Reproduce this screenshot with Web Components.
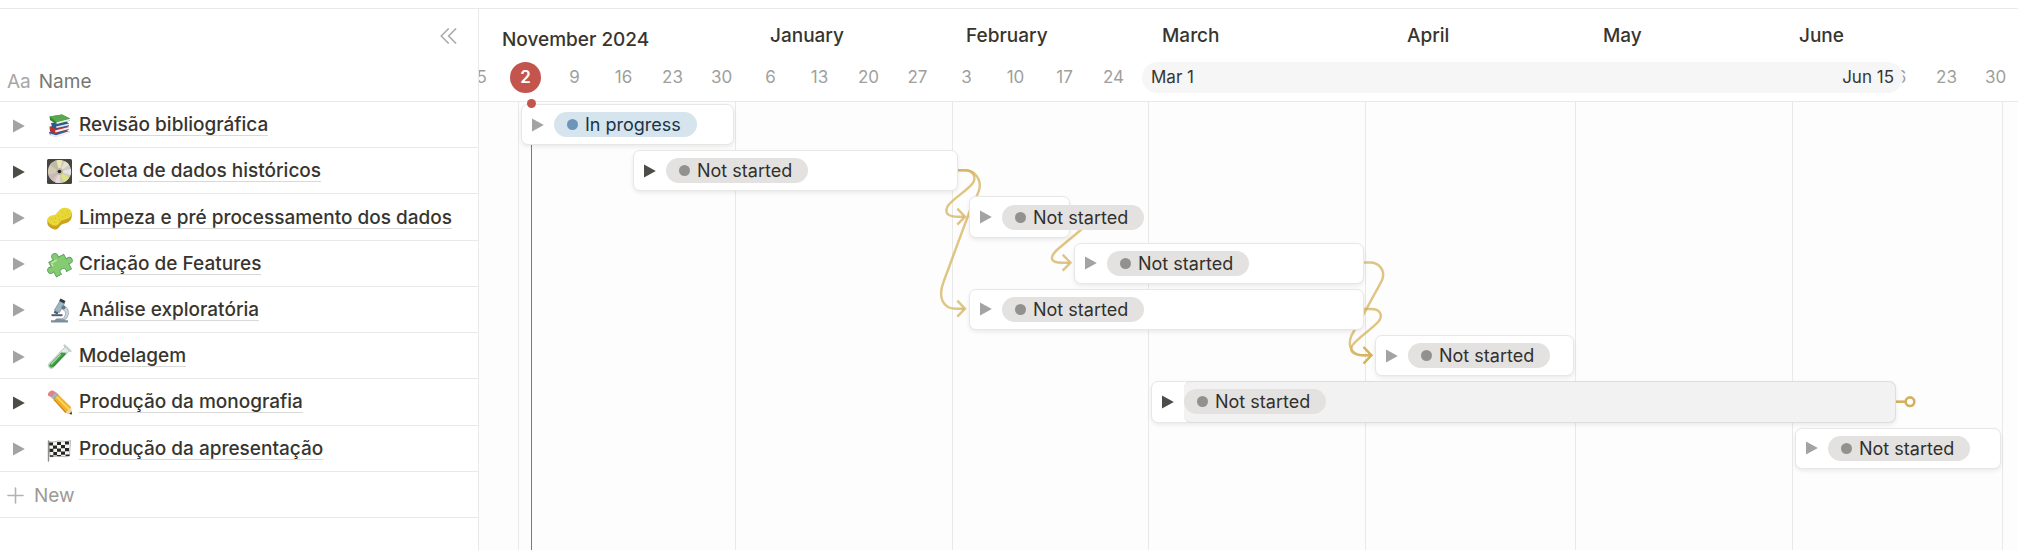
<!DOCTYPE html>
<html lang="pt-BR">
<head>
<meta charset="utf-8">
<title>Timeline</title>
<style>
  body { margin: 0; background: #fff; font-family: Inter, "Liberation Sans", sans-serif; color: #37352f; }
</style>
</head>
<body>
<timeline-view></timeline-view>

<script>
const LINE = '#e9e9e8';

class BaseElement extends HTMLElement {
  constructor() {
    super();
    this.attachShadow({ mode: 'open' });
  }
  connectedCallback() {
    this.shadowRoot.innerHTML = this.render();
  }
}

/* Page icons, drawn on a 25px square */
const ICONS = {
  books: `<path d="M2 19 18 16l5 3-14 5-6-2z" fill="#2f5f9c"/><path d="M3 20.500 9 22.300 22.500 18v2L9.500 24.300 4 22.700z" fill="#f0f0ee"/>
    <path d="M2.500 13.500 18 11.500l4 2.500v2.600L8 20.500 3 18.500z" fill="#b9302f"/><path d="M8 17.500 22 14v2L8.500 19.600z" fill="#f3efea"/>
    <path d="M4 10 19 8.500l3 2v2.500L9 16 5 14z" fill="#2c5797"/><path d="M9 13.500 22 10.500v1.800L9.500 15z" fill="#e9eaec"/>
    <path d="M2.500 3.500 15 1.500 23 5.500v2.200L9.500 11.500 3 7z" fill="#35853a"/><path d="M2.500 3.500 15 1.500 23 5.500 9.500 9z" fill="#58a84f"/><path d="M9.500 9.300 23 5.800v1.700L9.700 11z" fill="#eef1ea"/>`,
  disc: `<rect width="25" height="25" rx="1.500" fill="#45443f"/>
    <circle cx="12.500" cy="12.500" r="11.600" fill="#d3ccb4"/>
    <path d="M12.500 12.500 3 6A11.600 11.600 0 0 1 9 1.500z" fill="#c0b9a5"/>
    <path d="M12.500 12.500 9.500 1.300A11.600 11.600 0 0 1 15 1.200z" fill="#ebe8b9"/>
    <path d="M12.500 12.500 18 2.300A11.600 11.600 0 0 1 22 6z" fill="#e6dfd7"/>
    <path d="M12.500 12.500 23.800 10A11.600 11.600 0 0 1 23.600 16z" fill="#e2e4ec"/>
    <path d="M12.500 12.500 22 19A11.600 11.600 0 0 1 17 23.200z" fill="#dfe37d"/>
    <path d="M12.500 12.500 13 24.100A11.600 11.600 0 0 1 8 23.200z" fill="#ead9dc"/>
    <path d="M12.500 12.500 5 21.300A11.600 11.600 0 0 1 1.500 16z" fill="#cbb7c0"/>
    <circle cx="12.500" cy="12.500" r="3.600" fill="#bdb9a4"/><circle cx="12.500" cy="12.500" r="1.800" fill="#25241f"/>`,
  sponge: `<path d="M.4 13.500V18c1 3 5 5.500 8.300 5.500 3.300-.5 3.500-3.500 6-5 2.500-1.300 5.500-1 8-3.500 2-2 2.300-4 2.100-8.500z" fill="#c9a51f"/>
    <path d="M.5 13C1 10.500 4 9.500 7 9c3-.7 4-4.500 7-6.300C17 1 22.500 2 24.300 5c1.200 3.500-.8 6.500-3.800 7.700-2.500 1-4.500.8-6.500 2.300-2 1.800-2.500 4.500-5.500 4.700C5 19.800 0 16.800.5 13z" fill="#e9d736"/>
    <path d="M4 13h1M8 12h1M7 16h1M11 10h1M12 14h1M15 6h1M18 9h1M20 5h1M15 11h1M21 8h1" stroke="#cdb626" stroke-width="1.100"/>`,
  puzzle: `<g transform="rotate(-28 12.500 12.500)"><path d="M4 5.500h5.200C8 2.500 9.500.3 12 .3s4 2.200 2.800 5.200H21v5.300c3-1.200 5 .3 5 2.700s-2 4-5 2.700V22h-5.700c1.200-2.800-.5-4.500-2.800-4.500S8.500 19.200 9.700 22H4v-5.800C1 17.500-1 16-1 13.500s2-4 5-2.700z" fill="#86cb72" stroke="#59a060" stroke-width=".9"/><path d="M6 7.300h6M6 8v3" stroke="#c4edb0" stroke-width="1.300"/></g>`,
  microscope: `<path d="M4 24.500v-2.300h3.500l2-1.700h7l2 1.700H21v2.300z" fill="#7d8f9b"/>
    <path d="M15.500 7.500c6 1 8 8 3.500 13.500l-5 1c5-3 6.500-8.500 1.500-10.800z" fill="#cdd7dd" stroke="#8997a1" stroke-width=".7"/>
    <path d="M4.500 16.200h11v2h-11z" fill="#51606b"/>
    <path d="m13 2.800 4.500 2.400-5 9.300-5-2.500z" fill="#9fb5c4" stroke="#71869a" stroke-width=".7"/>
    <path d="M13.500.5 18.500 3l-1.300 2.400-5-2.500z" fill="#2e3b44"/><path d="m7.500 12.500 4 2-1.200 2-3.500-1.700z" fill="#4d5c69"/><circle cx="16.500" cy="9.500" r="2" fill="#657988"/>`,
  tube: `<path d="M18.500 2.500 2.200 19.500a2.900 2.900 0 0 0 4.200 4L22.500 6.500z" fill="#e3ebe6" stroke="#a9bdb0" stroke-width=".8"/>
    <path d="M14 8.500 2.900 20a2.100 2.100 0 0 0 3 3L19.500 8.800z" fill="#3f9e43"/>
    <path d="M13.500 10.500 4.500 20" stroke="#9bd99a" stroke-width="1.400" stroke-linecap="round"/>
    <path d="M18.500 9.800 6.200 22.600" stroke="#236f2c"/>
    <path d="m17.500 1.500 6 5.500" stroke="#c5cbc8" stroke-width="2.200" stroke-linecap="round"/>`,
  pencil: `<path d="M6.300 8.800 11 4.300 24 17l.8 7.300-7-1.500z" fill="#f0b429"/><path d="m9 6.200 13.500 13.600" stroke="#fad566" stroke-width="1.800"/><path d="M7 9.500 19 22.600" stroke="#cf8b1c" stroke-width="1.300"/>
    <path d="m18.300 22.900 5.300-5.500 1.200 7z" fill="#f0d3a2"/><path d="m22.300 23.900 2.200-2.300.4 2.900z" fill="#33302c"/>
    <path d="m4 6.500 4.500-4.300 2.700 2.300-4.800 4.700z" fill="#a9b4bd" stroke="#77828b" stroke-width=".5"/>
    <path d="M1.200 5.700C-.3 3.300 3.500-.6 6.200.6l2.500 1.800L4 7z" fill="#e58286"/>`,
  flag: `<path d="M2 4.500c4 1.500 7-.8 11-.5s7 1 10.500-.5l-1 15.500c-4 1.500-6.500.3-10 0s-6 1.500-9.500.5z" fill="#f4f4f3" stroke="#777" stroke-width=".5"/>
    <path d="M2 5.500h4v3H2zM10 5h4v3h-4zM18 4.500h4v3h-4zM6 8.500h4v3.200H6zM14 8h4v3.200h-4zM2.500 11.700h3.800v3.200H2.500zM10 11.500h4v3.200h-4zM18 11h4v3.200h-4zM6.300 15H10v3.300H6.300zM14 14.500h4v3.200h-4zM2.800 18.300h3.500v1.500H2.800zM10 18h4v1.200h-4zM18.500 17.500h4V19h-4z" fill="#262625"/>
    <path d="M1.500 4v20" stroke="#8f8f8e" stroke-width="1.400" stroke-linecap="round"/>`
};

customElements.define('page-icon', class extends BaseElement {
  render() {
    return `<style>:host { display: block; width: 25px; height: 25px; } svg { display: block; overflow: visible; }</style>
    <svg width="25" height="25" viewBox="0 0 25 25" fill="none" aria-hidden="true">${ICONS[this.getAttribute('name')]}</svg>`;
  }
});

/* Small disclosure triangle, dark when the item has sub-items */
customElements.define('disclosure-toggle', class extends BaseElement {
  render() {
    return `<style>
      :host { display: block; flex: none; width: 12px; height: 14px; color: #a3a3a1; }
      :host([filled]) { color: #4d4c48; }
      button { display: block; width: 12px; height: 14px; margin: 0; padding: 0; border: 0; background: none; color: inherit; }
      svg { display: block; }
    </style>
    <button type="button" aria-label="Toggle sub-items"><svg width="12" height="14" viewBox="0 0 12 14"><path d="M0 .4 11.8 7 0 13.6z" fill="currentColor"/></svg></button>`;
  }
});

/* One line of the name table */
customElements.define('task-row', class extends BaseElement {
  render() {
    return `<style>
      :host { display: flex; align-items: center; box-sizing: border-box; padding: 2px 0 0 13px; border-bottom: 1px solid ${LINE}; }
      page-icon { flex: none; margin: 0 7px 0 22px; }
      a { font-size: 19px; line-height: 20px; font-weight: 500; color: inherit; text-decoration: none; border-bottom: 1px solid #d9d9d7; white-space: nowrap; }
    </style>
    <disclosure-toggle ${this.hasAttribute('parent') ? 'filled' : ''}></disclosure-toggle>
    <page-icon name="${this.getAttribute('icon')}"></page-icon>
    <a href="#"><slot></slot></a>`;
  }
});

/* Bar on the timeline; start and end count days from 1 December */
customElements.define('task-bar', class extends BaseElement {
  render() {
    const at = n => Number(this.getAttribute(n));
    return `<style>
      :host { grid-column: ${at('start') + 1} / ${at('end') + 1}; grid-row: ${at('row')};
        position: relative; display: flex; align-items: center; box-sizing: border-box; min-width: 0;
        margin: 2px 1px 3px 3px; padding-left: 10px; border: 1px solid #e7e7e6; border-radius: 7px;
        background: #fff; box-shadow: 0 2px 4px rgba(15,15,15,.08); }
      .fill { position: absolute; inset: -1px -1px -1px 32px; box-sizing: border-box; border: 1px solid #dededd; border-left: 0; border-radius: 7px; background: #f2f2f2; }
      status-pill { position: relative; margin-left: 10px; }
    </style>
    ${this.hasAttribute('resizing') ? '<div class="fill"></div>' : ''}
    <disclosure-toggle ${this.hasAttribute('parent') ? 'filled' : ''}></disclosure-toggle>
    <status-pill ${this.hasAttribute('active') ? 'active' : ''}><slot></slot></status-pill>`;
  }
});

customElements.define('status-pill', class extends BaseElement {
  render() {
    return `<style>
      :host { display: flex; align-items: center; flex: none; gap: 7px; padding: 0 16px 0 13px; height: 25px; border-radius: 13px;
        background: #e3e2e0; color: #32302c; font-size: 18px; line-height: 25px; white-space: nowrap; --dot: #91918e; }
      :host([active]) { background: #d6e4ed; color: #183347; --dot: #6c96b9; }
      i { width: 11px; height: 11px; border-radius: 50%; background: var(--dot); }
    </style><i></i><span><slot></slot></span>`;
  }
});

/* Left pane: column header, task names, new button */
customElements.define('name-pane', class extends BaseElement {
  render() {
    return `<style>
      :host { display: block; box-sizing: border-box; flex: none; width: 479px; border-right: 1px solid ${LINE}; background: #fff; }
      header { display: flex; flex-direction: column; justify-content: space-between; box-sizing: border-box; height: 93px; padding: 18px 20px 7px 7px; border-bottom: 1px solid ${LINE}; }
      button { display: flex; align-items: center; margin: 0; padding: 0; border: 0; background: none; font: inherit; }
      .collapse { align-self: flex-end; width: 18px; height: 18px; color: #acaba9; }
      .label { display: flex; gap: 8px; font-size: 19px; line-height: 24px; color: #787774; }
      .label span { color: #a8a7a5; }
      .rows { display: grid; grid-template-rows: repeat(9, 1fr); height: var(--rows); }
      .new { gap: 10px; padding: 2px 0 0 7px; border-bottom: 1px solid ${LINE}; color: #9b9a97; font-size: 19px; }
      .new svg { color: #b3b2b0; }
      svg { display: block; }
    </style>
    <header>
      <button class="collapse" type="button" aria-label="Hide table"><svg width="18" height="18" viewBox="0 0 18 18" fill="none" stroke="currentColor" stroke-width="1.7" stroke-linecap="round" stroke-linejoin="round"><path d="M8.2 2 1.2 9l7 7M15.6 2l-7 7 7 7"/></svg></button>
      <div class="label"><span>Aa</span>Name</div>
    </header>
    <div class="rows">
      <task-row icon="books">Revisão bibliográfica</task-row>
      <task-row icon="disc" parent>Coleta de dados históricos</task-row>
      <task-row icon="sponge">Limpeza e pré processamento dos dados</task-row>
      <task-row icon="puzzle">Criação de Features</task-row>
      <task-row icon="microscope">Análise exploratória</task-row>
      <task-row icon="tube">Modelagem</task-row>
      <task-row icon="pencil" parent>Produção da monografia</task-row>
      <task-row icon="flag">Produção da apresentação</task-row>
      <button class="new" type="button"><svg width="17" height="17" viewBox="0 0 17 17" stroke="currentColor" stroke-width="1.6" stroke-linecap="round"><path d="M8.500 1v15M1 8.500h15"/></svg>New</button>
    </div>`;
  }
});

/* Month names over weekly ticks; every week is 49px wide */
customElements.define('time-axis', class extends BaseElement {
  render() {
    const months = [[7, 'January'], [11, 'February'], [15, 'March'], [20, 'April'], [24, 'May'], [28, 'June']];
    const ticks = [[1, 25], [2, 2], [3, 9], [4, 16], [5, 23], [6, 30], [7, 6], [8, 13], [9, 20], [10, 27],
      [11, 3], [12, 10], [13, 17], [14, 24], [30, 16], [31, 23], [32, 30]];
    return `<style>
      :host { display: block; box-sizing: border-box; height: 93px; overflow: hidden; border-bottom: 1px solid ${LINE}; background: #fff; }
      .months, .ticks { display: grid; grid-template-columns: repeat(32, 49px); }
      .months { grid-template-rows: 53px; margin-left: -3px; font-size: 19px; line-height: 54px; font-weight: 500; white-space: nowrap; }
      .months .current { grid-column: 1 / 5; padding-left: 26px; line-height: 62px; }
      .ticks { position: relative; grid-template-rows: 31px; margin-left: -27px; font-size: 17px; line-height: 31px; text-align: center; color: #a09f9d; }
      .ticks span { grid-row: 1; }
      .ticks .today { justify-self: center; width: 31px; border-radius: 50%; background: #c4554d; color: #fff; font-weight: 600; }
      .range { position: absolute; left: 690px; width: 761px; box-sizing: border-box; display: flex; justify-content: space-between; padding: 0 9px; border-radius: 16px; background: #f6f6f6; color: #37352f; }
    </style>
    <div class="months"><span class="current">November 2024</span>
      ${months.map(([w, t]) => `<span style="grid-column:${w}/span 4;grid-row:1">${t}</span>`).join('')}</div>
    <div class="ticks">
      ${ticks.map(([w, t]) => `<span ${w === 2 ? 'class="today"' : ''} style="grid-column:${w}">${t}</span>`).join('')}
      <div class="range"><time datetime="2025-03-01">Mar 1</time><time datetime="2025-06-15">Jun 15</time></div>
    </div>`;
  }
});

/* Arrows between dependent tasks */
customElements.define('dependency-arrows', class extends BaseElement {
  render() {
    return `<style>
      :host { display: block; position: absolute; inset: 0; }
      svg { display: block; overflow: visible; }
      .a { fill: none; stroke: #d4b25a; stroke-width: 2.4; stroke-opacity: .75; stroke-linecap: butt; stroke-linejoin: miter; }
    </style>
    <svg width="1" height="1" aria-hidden="true"><g transform="translate(-479 -102)">
      <g class="a">
        <path d="M957 170.300H965C973 170.500 977 177 972.500 183.500C967 191 952 199 947.500 206.500C944 214 949 216.700 958 216.700H964"/>
        <path d="M957 170.300H966C974 170.500 980 178 979.800 186C979.500 193 975 199 972 205L943.500 282C938 296 942 308.700 956 308.700H964"/>
        <path d="M1069 216.700H1077C1086 217 1089 223 1082 229L1058 249C1048 258 1051 262.700 1062 262.700H1069"/>
        <path d="M1363 262.500H1370C1380 262.500 1385 271 1382.500 279C1380 285 1373 296 1366 310L1354 331C1346 343 1350 355.300 1363 355.300H1370"/>
        <path d="M1363 309H1371C1380 309 1383.500 315 1378.500 321.500C1371 330 1356 339 1352 346C1349 353 1356 355.300 1364 355.300H1370"/>
        <path d="M957.300 208.700 965 216.700 957.300 224.700M957.300 300.700 965 308.700 957.300 316.700M1062.700 254.700 1070.500 262.700 1062.700 270.700"/>
        <path d="M1363.500 347 1371.500 355.300 1363.500 363.600" style="stroke-opacity:1"/>
      </g>
      <g fill="none" stroke="#d2b15f" stroke-width="2.6"><path d="M1896 401.700H1905"/><circle cx="1910" cy="401.700" r="4.300" fill="#fff"/></g>
    </g></svg>`;
  }
});

customElements.define('time-canvas', class extends BaseElement {
  render() {
    return `<style>
      :host { display: block; position: relative; flex: 1; overflow: clip; overflow-clip-margin: 5px; background: #fdfdfd; }
      .lines { position: absolute; inset: 0; display: grid; grid-template-columns: 39px 217px 217px 196px 217px 210px 217px 210px 1fr; }
      .lines i { border-right: 1px solid ${LINE}; margin-right: -1px; }
      .lines i:last-child { border: 0; }
      .now { position: absolute; top: 0; bottom: 0; left: 52px; width: 1px; background: #b5625b; }
      .knob { position: absolute; top: -3px; left: 48px; width: 9px; height: 9px; border-radius: 50%; background: #c4554d; }
      .bars { position: relative; display: grid; grid-template-rows: repeat(9, 1fr); grid-template-columns: repeat(212, 7px); height: var(--rows); margin-left: 39px; }
    </style>
    <div class="lines">${'<i></i>'.repeat(9)}</div>
    <div class="now"></div>
    <dependency-arrows></dependency-arrows>
    <div class="bars">
      <task-bar row="1" start="0" end="31" active>In progress</task-bar>
      <task-bar row="2" start="16" end="63" parent>Not started</task-bar>
      <task-bar row="3" start="64" end="79">Not started</task-bar>
      <task-bar row="4" start="79" end="121">Not started</task-bar>
      <task-bar row="5" start="64" end="121">Not started</task-bar>
      <task-bar row="6" start="122" end="151">Not started</task-bar>
      <task-bar row="7" start="90" end="197" parent resizing>Not started</task-bar>
      <task-bar row="8" start="182" end="212">Not started</task-bar>
    </div>
    <div class="knob"></div>`;
  }
});

customElements.define('timeline-view', class extends BaseElement {
  render() {
    return `<style>
      :host { display: flex; box-sizing: border-box; min-height: 100vh; padding-top: 8px; --rows: 416px; overflow: hidden; }
      :host::before { content: ""; position: absolute; top: 8px; left: 0; right: 0; height: 1px; background: ${LINE}; z-index: 1; }
      name-pane { padding-top: 1px; }
      .time { flex: 1; min-width: 0; display: flex; flex-direction: column; padding-top: 1px; overflow: hidden; }
    </style>
    <name-pane></name-pane>
    <div class="time"><time-axis></time-axis><time-canvas></time-canvas></div>`;
  }
});
</script>
</body>
</html>
